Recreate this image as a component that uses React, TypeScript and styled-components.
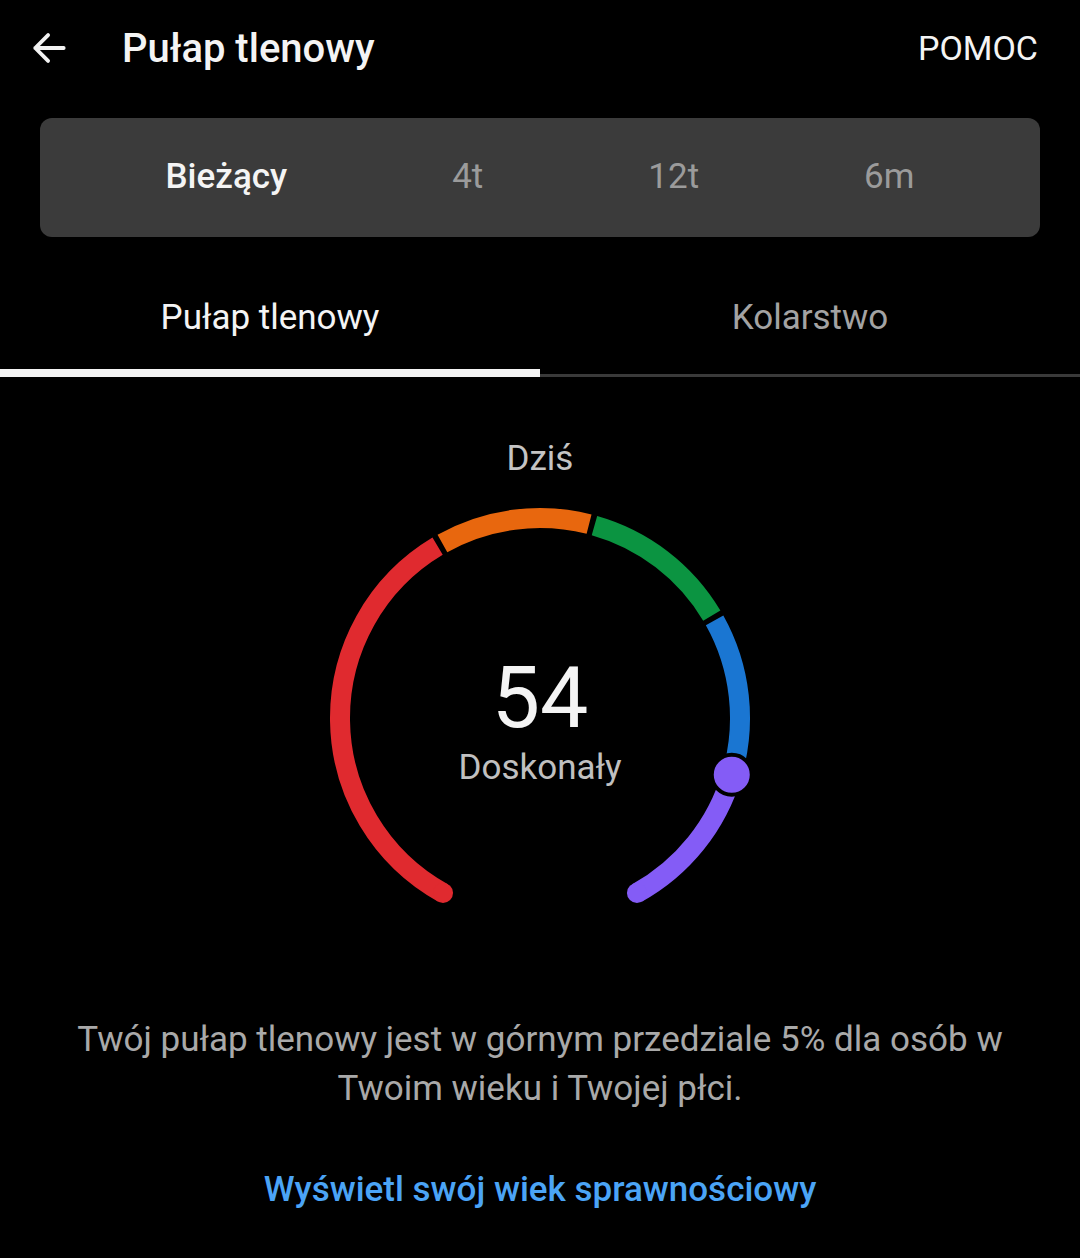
import React from "react";
import styled, { createGlobalStyle } from "styled-components";

const GlobalStyle = createGlobalStyle`
  html, body {
    margin: 0;
    padding: 0;
    background: #000;
  }
  body {
    font-family: Roboto, "Noto Sans", "Liberation Sans", sans-serif;
    color: #f2f2f2;
  }
`;

const CX = 220;
const CY = 228;
const R = 200;

const pt = (deg: number) => {
  const a = (deg * Math.PI) / 180;
  return [CX + R * Math.cos(a), CY + R * Math.sin(a)];
};

const arc = (from: number, to: number) => {
  const [x1, y1] = pt(from);
  const [x2, y2] = pt(to);
  const large = to - from > 180 ? 1 : 0;
  return `M ${x1} ${y1} A ${R} ${R} 0 ${large} 1 ${x2} ${y2}`;
};

const segments = [
  { from: 119, to: 239.2, color: "#e02a2f" },
  { from: 240.8, to: 284.2, color: "#e8670e" },
  { from: 285.8, to: 329.2, color: "#0b9441" },
  { from: 330.8, to: 376.5, color: "#1a76d2" },
  { from: 376.5, to: 421, color: "#845cf6" },
];

const MARKER = 376.5;

const Gauge = () => {
  const [sx, sy] = pt(119);
  const [ex, ey] = pt(421);
  const [mx, my] = pt(MARKER);
  return (
    <GaugeSvg viewBox="0 0 440 440" width={440} height={440}>
      {segments.map((s) => (
        <path
          key={s.from}
          d={arc(s.from, s.to)}
          stroke={s.color}
          strokeWidth={20}
          fill="none"
        />
      ))}
      <circle cx={sx} cy={sy} r={10} fill="#e02a2f" />
      <circle cx={ex} cy={ey} r={10} fill="#845cf6" />
      <circle cx={mx} cy={my} r={20} fill="#845cf6" stroke="#000" strokeWidth={4} />
    </GaugeSvg>
  );
};

const BackIcon = () => (
  <svg width="44" height="44" viewBox="0 0 24 24">
    <path
      d="M20 12H4.5M11.5 5L4.5 12l7 7"
      stroke="#f2f2f2"
      strokeWidth={2.1}
      fill="none"
      strokeLinecap="round"
      strokeLinejoin="round"
    />
  </svg>
);

export default function App() {
  return (
    <>
      <GlobalStyle />
      <Page>
        <Header>
          <BackButton>
            <BackIcon />
          </BackButton>
          <Title>Pułap tlenowy</Title>
          <HelpLink>POMOC</HelpLink>
        </Header>

        <Segmented>
          <Segment $active>Bieżący</Segment>
          <Segment>4t</Segment>
          <Segment>12t</Segment>
          <Segment>6m</Segment>
        </Segmented>

        <Tabs>
          <Tab $active>Pułap tlenowy</Tab>
          <Tab>Kolarstwo</Tab>
        </Tabs>

        <DayLabel>Dziś</DayLabel>

        <GaugeWrap>
          <Gauge />
          <GaugeCenter>
            <Value>54</Value>
            <Rating>Doskonały</Rating>
          </GaugeCenter>
        </GaugeWrap>

        <Description>
          Twój pułap tlenowy jest w górnym przedziale 5% dla osób w Twoim wieku i
          Twojej płci.
        </Description>

        <ActionLink>Wyświetl swój wiek sprawnościowy</ActionLink>
      </Page>
    </>
  );
}

const Page = styled.div`
  width: 1080px;
  min-height: 1258px;
  background: #000;
  display: flex;
  flex-direction: column;
  align-items: stretch;
`;

const Header = styled.div`
  height: 96px;
  display: flex;
  align-items: center;
  padding: 0 42px 0 27px;
`;

const BackButton = styled.div`
  width: 44px;
  height: 44px;
  display: flex;
  align-items: center;
  justify-content: center;
`;

const Title = styled.div`
  margin-left: 51px;
  font-size: 40px;
  font-weight: 500;
  color: #f4f4f4;
  flex: 1;
`;

const HelpLink = styled.div`
  font-size: 34px;
  font-weight: 400;
  color: #f4f4f4;
`;

const Segmented = styled.div`
  margin: 22px 40px 0;
  height: 119px;
  background: #3b3b3b;
  border-radius: 12px;
  display: flex;
  align-items: center;
  justify-content: center;
  gap: 165px;
`;

const Segment = styled.div<{ $active?: boolean }>`
  font-size: 35px;
  line-height: 44px;
  margin-top: -1px;
  font-weight: ${(p) => (p.$active ? 500 : 400)};
  color: ${(p) => (p.$active ? "#f4f4f4" : "#9b9b9b")};
`;

const Tabs = styled.div`
  margin-top: 36px;
  display: flex;
  align-items: flex-end;
`;

const Tab = styled.div<{ $active?: boolean }>`
  flex: 1;
  height: 104px;
  box-sizing: border-box;
  text-align: center;
  line-height: 90px;
  font-size: 35px;
  color: ${(p) => (p.$active ? "#f4f4f4" : "#a3a3a3")};
  border-bottom: ${(p) => (p.$active ? "8px solid #f4f4f4" : "3px solid #3a3a3a")};
`;

const DayLabel = styled.div`
  margin-top: 62px;
  line-height: 40px;
  text-align: center;
  font-size: 35px;
  color: #c4c4c4;
`;

const GaugeWrap = styled.div`
  position: relative;
  margin: 11px auto 0;
  width: 440px;
  height: 440px;
`;

const GaugeSvg = styled.svg`
  display: block;
`;

const GaugeCenter = styled.div`
  position: absolute;
  left: 0;
  right: 0;
  top: 158px;
  display: flex;
  flex-direction: column;
  align-items: center;
`;

const Value = styled.div`
  font-size: 86px;
  line-height: 100px;
  color: #f4f4f4;
`;

const Rating = styled.div`
  font-size: 35px;
  line-height: 40px;
  color: #c0c0c0;
`;

const Description = styled.div`
  margin: 85px 60px 0;
  text-align: center;
  font-size: 35px;
  line-height: 49px;
  color: #a9a9a9;
`;

const ActionLink = styled.div`
  margin-top: 53px;
  text-align: center;
  font-size: 35px;
  font-weight: 500;
  line-height: 48px;
  color: #4ba4f6;
`;
